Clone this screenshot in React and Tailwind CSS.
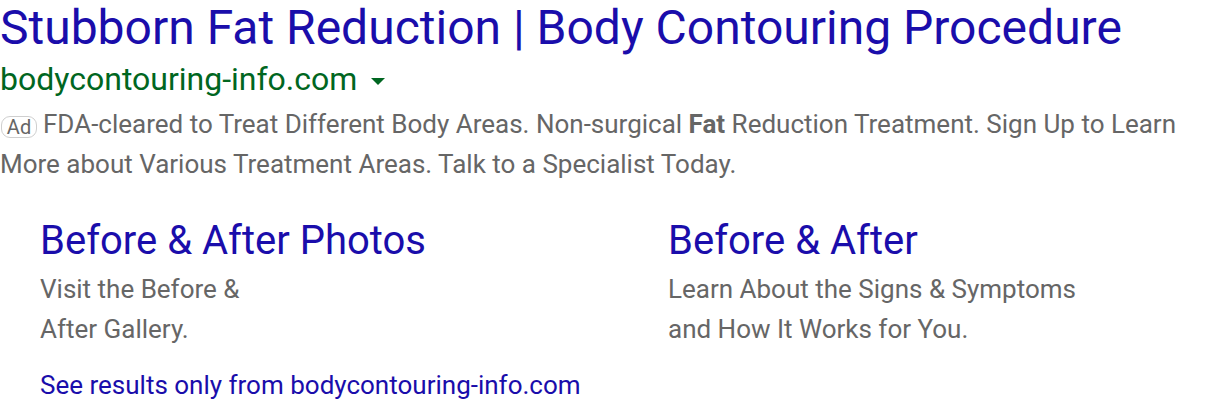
import React from 'react';

const sitelinks = [
    { title: 'Before & After Photos', lines: ['Visit the Before &', 'After Gallery.'] },
    { title: 'Before & After', lines: ['Learn About the Signs & Symptoms', 'and How It Works for You.'] },
];

const App = () => {
    return (
        <div className="w-[1216px] h-[408px] bg-white overflow-hidden font-['Roboto',sans-serif]">
            {/* Headline */}
            <div className="text-[48px] leading-[56px] text-[#1a0dab] whitespace-nowrap">
                Stubborn Fat Reduction | Body Contouring Procedure
            </div>

            {/* Display url */}
            <div className="flex items-center gap-[14px] text-[32px] leading-[46px] text-[#006621]">
                <span>bodycontouring-info.com</span>
                <span className="w-0 h-0 border-l-[7px] border-r-[7px] border-t-[7px] border-l-transparent border-r-transparent border-t-[#006621] mt-[4px]" />
            </div>

            {/* Description */}
            <div className="text-[26px] leading-[40px] text-[#666666] mt-[2px] whitespace-nowrap">
                <span className="inline-flex items-center justify-center w-[36px] h-[22px] mr-[6px] ml-[1px] border border-[#cfcfcf] rounded-[9px] text-[20px] leading-none align-[-1px]">
                    Ad
                </span>
                FDA-cleared to Treat Different Body Areas. Non-surgical <b className="font-bold">Fat</b> Reduction Treatment. Sign Up to Learn
                <br />
                More about Various Treatment Areas. Talk to a Specialist Today.
            </div>

            {/* Sitelinks */}
            <div className="flex pl-[40px] mt-[33px]">
                {sitelinks.map((s) => (
                    <div key={s.title} className="w-[628px] shrink-0">
                        <div className="text-[40px] leading-[48px] text-[#1a0dab]">{s.title}</div>
                        <div className="text-[26px] leading-[40px] text-[#666666] mt-[4px]">
                            {s.lines.map((l) => (
                                <div key={l}>{l}</div>
                            ))}
                        </div>
                    </div>
                ))}
            </div>

            <div className="pl-[40px] mt-[16px] text-[26px] leading-[40px] text-[#1a0dab]">
                See results only from bodycontouring-info.com
            </div>
        </div>
    );
};

export default App;
